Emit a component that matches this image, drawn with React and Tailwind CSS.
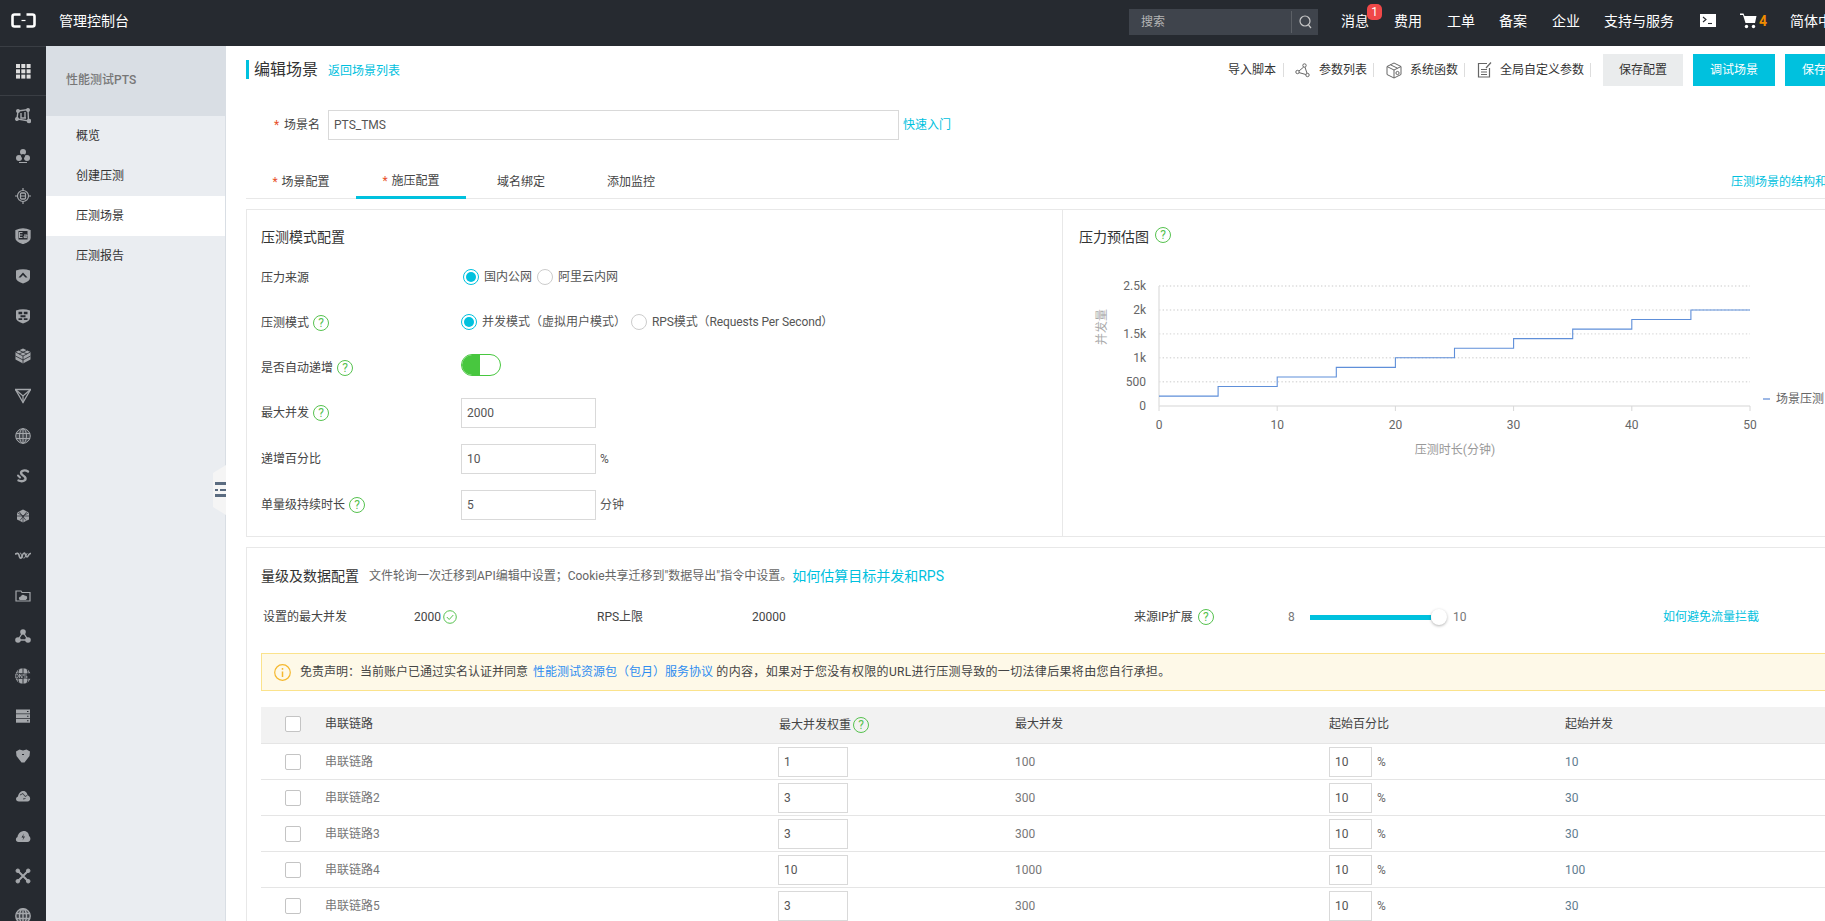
import React from "react";

const C = "#a4a7ab";
const D = "#262a30";
const railIcons = [
  <g fill="none" stroke={C} strokeWidth="1.4"><path d="M3 3 L13 1.5 L13.5 13 L2 11 Z" /><path d="M6 5v5h5M10 4v6" /><circle cx="3" cy="3" r="1.3" fill={C} /><circle cx="13" cy="2" r="1.3" fill={C} /><circle cx="14" cy="13" r="1.6" fill={C} /><circle cx="2" cy="11" r="1.3" fill={C} /></g>,
  <g fill={C}><circle cx="8" cy="4" r="3" /><circle cx="4" cy="10" r="3" /><circle cx="12" cy="10" r="3" /><circle cx="8" cy="8" r="2" fill={D} /><path d="M4 14h8v1H4z" /></g>,
  <g fill="none" stroke={C} strokeWidth="1.2"><circle cx="8" cy="8" r="5.5" /><rect x="5.5" y="5" width="5" height="6" rx="1" strokeWidth="1.3" /><path d="M5.5 8h5M8 0v2.5M8 13.5V16M0 8h2.5M13.5 8H16" /></g>,
  <g fill="none" stroke={C} strokeWidth="1.3"><path d="M1 2.5 Q8 -0.5 15 2.5 V10 Q15 13 8 15.5 Q1 13 1 10 Z" fill={C} /><rect x="3.5" y="3" width="9" height="8.5" fill={D} stroke="none" /><path d="M4.5 4.5h3M4.5 7h3M4.5 9.5h3M9 7h3v1.2h-3v1.4h3M4.5 4v6" strokeWidth="1" /></g>,
  <g><path d="M1 2.5 Q8 0 15 2.5 V10 Q15 13 8 15.5 Q1 13 1 10 Z" fill={C} /><path d="M3.5 9.5 L8 4.5 L12.5 9.5 L10.5 9.5 L8 7 L5.5 9.5 Z" fill={D} /></g>,
  <g><path d="M1 2.5 Q8 0 15 2.5 V10 Q15 13 8 15.5 Q1 13 1 10 Z" fill={C} /><path d="M3.5 3.8h3.7v2.4H3.5zM8.8 3.8h3.7v2.4H8.8zM5.5 7.3h5v2h-5zM3.5 10.3h3.7v1.6H3.5zM8.8 10.3h3.7v1.6H8.8z" fill={D} /></g>,
  <g><path d="M8 0.5 L15.5 4 V11.5 L8 15.5 L0.5 11.5 V4 Z" fill={C} /><path d="M0.5 4 L8 8 L15.5 4M8 8v7.5M4 2.3 L12 6M12 2.3 L4 6M0.5 8 L8 12 L15.5 8" stroke={D} strokeWidth="0.8" fill="none" /></g>,
  <g fill="none" stroke={C} strokeWidth="1.3"><path d="M0.5 1.5 L15.5 1.5 L8 14.5 Z" /><path d="M0.5 1.5 L8 8 L15.5 1.5M8 8v6.5" /></g>,
  <g fill="none" stroke={C} strokeWidth="1"><circle cx="8" cy="8" r="7.3" fill={C} fillOpacity="0.25" /><ellipse cx="8" cy="8" rx="3.5" ry="7.3" /><path d="M1 5.5h14M1 10.5h14M8 .7v14.6" /></g>,
  <g fill="none" stroke={C} strokeWidth="2.4" strokeLinecap="round"><path d="M13 3.5 C10 1.5 6 2.5 6 5 C6 7 10 8 10.5 10 C11 13 7 14 3.5 12.5" /><path d="M3 7.5 L5 9.5" strokeWidth="2" /></g>,
  <g><path d="M8 1.5 L14 4.5 V11.5 L8 14.5 L2 11.5 V4.5 Z" fill={C} /><path d="M2 4.5 L8 8 L14 4.5M8 8v6.5M4 3.5 L11 12.5M12 3.5 L5 12.5M2 8h12" stroke={D} strokeWidth="0.7" fill="none" /></g>,
  <g fill="none" stroke={C} strokeWidth="1.6" strokeLinecap="round"><path d="M0.5 6 C2 5 3.5 5 4 7 C4.5 10 5.5 11 6.5 9.5 C7.5 7.5 8 4.5 9.5 5 C10.5 5.5 10.5 9 12 9 C13.5 9 13 6 15.5 5.5" /><path d="M5.5 5 L8 10M9.5 10 L12 5.5" strokeWidth="1" /></g>,
  <g fill="none" stroke={C} strokeWidth="1.2"><path d="M1 3 H6 L7 4.5 H15 V13 H1 Z" /><path d="M5 11.5 Q3.5 9.5 6 9 Q7 6.5 9.5 8 Q12 8 11.5 10.5 L10.5 11.5 Z" fill={C} /></g>,
  <g fill={C}><circle cx="8" cy="4" r="2.8" /><circle cx="3" cy="12" r="2.8" /><circle cx="13" cy="12" r="2.8" /><path d="M8 4 L3 12 H13 Z" fill="none" stroke={C} strokeWidth="1.3" /></g>,
  <g><circle cx="8" cy="8" r="7.8" fill={C} /><rect x="-0.5" y="5.2" width="17" height="5.6" fill={D} /><path d="M8 0v5M8 11v5M4 1.5 Q3 3 3 5M12 1.5 Q13 3 13 5M3 11 Q3 13 4 14.5M13 11 Q13 13 12 14.5" stroke={D} strokeWidth="0.9" fill="none" /><path d="M0.8 6v4h1.4l1-1v-2l-1-1zM4.6 10V6l2.4 4V6M8.8 6h3M8.8 6v2h3v2h-3" stroke={C} strokeWidth="0.9" fill="none" /></g>,
  <g fill={C}><rect x="1" y="1.5" width="14" height="4" /><rect x="1" y="6.2" width="14" height="4" /><rect x="1" y="10.9" width="14" height="3.8" /><path d="M12 3h1.5v1H12zM12 7.7h1.5v1H12zM12 12.3h1.5v1H12z" fill={D} /></g>,
  <g><path d="M1 3.5 L4.5 1.5 L8 2.5 L11.5 1.5 L15 3.5 L14.5 8 L9.5 14.5 H6.5 L1.5 8 Z" fill={C} /><path d="M7 6h2v1H7z" fill={D} /></g>,
  <g><path d="M4 13.5 C0.5 13.5 0 9.5 3 8.5 C3.5 5 6 3 8.5 3 C11 3 12.5 5.5 12.5 7.5 C15.5 7.5 16.5 13.5 12.5 13.5 Z" fill={C} /><path d="M5 7 L8 5.5 L10 8.5 L12 7.5M8 11 L10.5 10.5" stroke={D} strokeWidth="0.8" fill="none" /></g>,
  <g><path d="M3.5 14 C0.5 14 0 10 2.5 9 C3 5 6.5 3 9 3 C12 3 14 5.5 14 8 C16.5 9.5 15.5 14 12.5 14 Z" fill={C} /><path d="M9 5.5 L6.5 9.5 H8.5 L7.5 12.5 L10 8.5 H8 Z" fill={D} /></g>,
  <g fill={C} stroke={C}><path d="M3 3 L13 13M13 3 L3 13" strokeWidth="2" /><circle cx="2.8" cy="2.8" r="1.8" /><circle cx="13.2" cy="2.8" r="1.8" /><circle cx="2.8" cy="13.2" r="1.8" /><circle cx="13.2" cy="13.2" r="1.8" /></g>,
  <g fill="none" stroke={C} strokeWidth="1.4"><circle cx="8" cy="8" r="7.2" fill={C} fillOpacity="0.2" /><ellipse cx="8" cy="8" rx="3.5" ry="7.2" /><path d="M1 5.5h14M1 10.5h14M8 .8v14.4" /></g>,
];

const Help = ({ className = "" }) => (
  <span className={`inline-flex items-center justify-center w-4 h-4 rounded-full border border-[#56c24f] text-[#56c24f] text-[12px] leading-none ${className}`}>?</span>
);

const Radio = ({ on }) => (
  <span className={`flex items-center justify-center w-4 h-4 rounded-full border ${on ? "border-[#00c1de]" : "border-[#cccccc]"}`}>
    {on && <span className="w-[10px] h-[10px] rounded-full bg-[#00c1de]" />}
  </span>
);

const Field = ({ value, className = "" }) => (
  <input readOnly value={value} className={`border border-[#d9d9d9] text-xs text-[#555] pl-[5px] outline-none bg-white h-[30px] ${className}`} />
);

const FormRow = ({ label, help, helpClass, children, className = "", labelClass = "" }) => (
  <div className={`flex items-center h-[30px] ${className}`}>
    <div className={`w-[200px] flex items-center gap-[4px] text-xs text-[#444] ${labelClass}`}>
      <span>{label}</span>
      {help && <Help className={helpClass} />}
    </div>
    {children}
  </div>
);

const Sep = () => <span className="block w-px h-[14px] bg-[#dddddd]" />;

const StepChart = () => {
  const x = (t) => 1159 + t * 11.82;
  const y = (v) => 405.7 - v * 0.04788;
  let d = `M${x(0)} ${y(200)}`;
  for (let i = 0; i < 10; i++) {
    const v = (i + 1) * 200;
    d += ` L${x((i + 1) * 5)} ${y(v)}`;
    if (i < 9) d += ` L${x((i + 1) * 5)} ${y(v + 200)}`;
  }
  const t = { fontSize: 12, fill: "#666", fontFamily: "Roboto, 'Noto Sans CJK SC', sans-serif" };
  return (
    <svg viewBox="1063 270 762 200" className="w-[762px] h-[200px] block">
      {[500, 1000, 1500, 2000, 2500].map((v) => (
        <line key={v} x1={1159} x2={1750} y1={y(v)} y2={y(v)} stroke="#dcdcdc" strokeWidth="1.4" strokeDasharray="1.4 2.2" />
      ))}
      <line x1={1159} x2={1159} y1={286} y2={406} stroke="#e3e3e3" strokeWidth="1.5" />
      <line x1={1159} x2={1750} y1={406} y2={406} stroke="#e3e3e3" strokeWidth="1.5" />
      {[0, 10, 20, 30, 40, 50].map((v) => (
        <g key={v}>
          <line x1={x(v)} x2={x(v)} y1={406} y2={411} stroke="#d8d8d8" />
          <text x={x(v)} y={429} textAnchor="middle" {...t}>{v}</text>
        </g>
      ))}
      {[["0", 0], ["500", 500], ["1k", 1000], ["1.5k", 1500], ["2k", 2000], ["2.5k", 2500]].map(([l, v]) => (
        <text key={l} x={1146} y={y(v) + 4} textAnchor="end" {...t}>{l}</text>
      ))}
      <path d={d} fill="none" stroke="#5f8fd9" strokeWidth="1.1" />
      <text x={1455} y={454} textAnchor="middle" {...t} fill="#999">压测时长(分钟)</text>
      <text transform="rotate(-90 1102 327)" x={1102} y={331} textAnchor="middle" {...t} fill="#aaa">并发量</text>
      <rect x={1763} y={398} width={7} height={2} fill="#9db8e6" />
      <text x={1776} y={403} {...t}>场景压测</text>
    </svg>
  );
};

const rows = [
  ["串联链路", "1", "100", "10"],
  ["串联链路2", "3", "300", "30"],
  ["串联链路3", "3", "300", "30"],
  ["串联链路4", "10", "1000", "100"],
  ["串联链路5", "3", "300", "30"],
];
const gridCols = "grid grid-cols-[517px_237px_314px_236px_1fr] items-center";
const Check = () => <span className="w-4 h-4 rounded-[2px] border border-[#c4c4c4] bg-white shrink-0" />;

export default function App() {
  return (
    <div className="w-[1825px] h-[921px] overflow-hidden flex flex-col bg-white font-['Roboto','Noto_Sans_CJK_SC',sans-serif]">
      {/* top bar */}
      <header className="h-[46px] shrink-0 bg-[#262a30] flex items-center pb-[5px] text-white text-sm whitespace-nowrap [&>*]:shrink-0">
        <div className="w-[46px] flex justify-center">
          <svg width="25" height="15" viewBox="0 0 25 15" fill="none" stroke="#fff" strokeWidth="2.6">
            <path d="M9.5 1.5 H3.5 Q1.5 1.5 1.5 3.5 V11.5 Q1.5 13.5 3.5 13.5 H9.5" />
            <path d="M15.5 1.5 H21.5 Q23.5 1.5 23.5 3.5 V11.5 Q23.5 13.5 21.5 13.5 H15.5" />
            <path d="M10.5 7.5 H14.5" strokeWidth="1.2" />
          </svg>
        </div>
        <span className="ml-[13px] w-[70px]">管理控制台</span>
        <div className="ml-[1000px] w-[189px] h-[26px] bg-[#3f444c] flex items-center text-xs text-[#b5b5b5] pl-3 mt-[2px]">
          <span className="w-[150px]">搜索</span>
          <span className="w-px h-[22px] bg-[#5c6066]" />
          <svg className="ml-[7px]" width="13" height="14" viewBox="0 0 13 14" fill="none" stroke="#c8c8c8" strokeWidth="1.2">
            <circle cx="6" cy="6" r="5" /><path d="M9.5 10 L12 13" />
          </svg>
        </div>
        <div className="relative ml-[23px]">
          消息
          <span className="absolute left-[26px] top-[-7px] w-[15px] h-[16px] rounded-[5px] bg-[#f04848] text-[12px] leading-[16px] text-center">1</span>
        </div>
        <span className="ml-[25px]">费用</span>
        <span className="ml-[25px]">工单</span>
        <span className="ml-[24px]">备案</span>
        <span className="ml-[25px]">企业</span>
        <span className="ml-[24px]">支持与服务</span>
        <svg className="ml-[26px]" width="16" height="13" viewBox="0 0 16 13">
          <rect width="16" height="13" fill="#fff" />
          <path d="M3 3 L6 5.5 L3 8" fill="none" stroke="#262a30" strokeWidth="1.1" /><path d="M8 9.5 H12" stroke="#262a30" strokeWidth="1.1" />
        </svg>
        <svg className="ml-[24px]" width="17" height="16" viewBox="0 0 17 16" fill="#fff">
          <path d="M0 0.5 H3.5 L4.5 3 H16.5 L15 10 H5.5 L3 2 H0 Z" /><circle cx="6.5" cy="13.5" r="1.7" /><circle cx="13.5" cy="13.5" r="1.7" />
        </svg>
        <span className="ml-[2px] font-bold text-[#f08c00] w-[8px]">4</span>
        <span className="ml-[23px]">简体中文</span>
      </header>

      <div className="flex flex-1 min-h-0">
        {/* rail */}
        <nav className="w-[46px] shrink-0 bg-[#262a30] border-t border-[#3a3e44] flex flex-col">
          <div className="h-[49px] shrink-0 border-b border-[#3a3e44] flex items-center justify-center">
            <svg width="15" height="15" viewBox="0 0 15 15" fill="#dddddd">
              {[0, 5.3, 10.6].flatMap((a) => [0, 5.3, 10.6].map((b) => <rect key={`${a}-${b}`} x={a} y={b} width="4" height="4" />))}
            </svg>
          </div>
          {railIcons.map((icon, i) => (
            <div key={i} className="h-10 shrink-0 flex items-center justify-center">
              <svg width="16" height="16" viewBox="0 0 16 16">{icon}</svg>
            </div>
          ))}
        </nav>

        {/* sidebar */}
        <aside className="relative w-[180px] shrink-0 bg-[#eaedf1] border-r border-[#d9dee4] text-xs text-[#333]">
          <div className="h-[70px] bg-[#d9dee4] flex items-center pl-5 pb-[2px] text-[#777] font-medium">性能测试PTS</div>
          {["概览", "创建压测", "压测场景", "压测报告"].map((t) => (
            <div key={t} className={`h-10 flex items-center pl-[30px] ${t === "压测场景" ? "bg-white" : ""}`}>{t}</div>
          ))}
          <div className="absolute left-[167px] top-[419px] w-[13px] h-[50px]">
            <svg width="13" height="50" viewBox="0 0 13 50" className="block">
              <polygon points="13,0 0,8 0,42 13,50" fill="#f5f5f5" />
              <rect x="2" y="17" width="11" height="3" fill="#5a6b80" />
              <rect x="2" y="24" width="3" height="2" fill="#5a6b80" />
              <rect x="7" y="24" width="6" height="2" fill="#5a6b80" />
              <rect x="2" y="29" width="11" height="3" fill="#5a6b80" />
            </svg>
          </div>
        </aside>

        {/* main */}
        <main className="flex-1 min-w-0 pl-5">
          <div className="w-[1640px]">
            {/* toolbar */}
            <div className="flex items-center h-8 mt-2 whitespace-nowrap">
              <span className="w-[3px] h-[19px] bg-[#00c1de] -mt-[1px]" />
              <span className="ml-[5px] text-base text-[#333] leading-none">编辑场景</span>
              <span className="ml-[10px] text-xs text-[#00c1de] mt-[2px]">返回场景列表</span>
              <div className="ml-auto flex items-center text-xs text-[#333] pr-[19px]">
                <span>导入脚本</span>
                <span className="ml-[7px]"><Sep /></span>
                <svg className="ml-[11px]" width="15" height="15" viewBox="0 0 15 15" fill="none" stroke="#666" strokeWidth="1">
                  <circle cx="9.5" cy="2.5" r="1.7" /><circle cx="2.5" cy="9" r="1.7" /><circle cx="12.5" cy="12" r="1.7" />
                  <path d="M8.7 4 L4 8M10 4.2 L12 10.3M4 9.6 L10.8 11.5" />
                </svg>
                <span className="ml-[9px]">参数列表</span>
                <span className="ml-[6px]"><Sep /></span>
                <svg className="ml-3" width="16" height="17" viewBox="0 0 16 17" fill="none" stroke="#666" strokeWidth="1">
                  <path d="M8 1 L15 4.5 V12.5 L8 16 L1 12.5 V4.5 Z" /><path d="M1 4.5 L8 8 L15 4.5M8 8v8M4.5 2.8 L11.5 6.2" /><circle cx="11.5" cy="11" r="1.6" />
                </svg>
                <span className="ml-2">系统函数</span>
                <span className="ml-[6px]"><Sep /></span>
                <svg className="ml-3" width="15" height="16" viewBox="0 0 15 16" fill="none" stroke="#666" strokeWidth="1.2">
                  <path d="M10 1.5 H1.5 V15 H12.5 V6" /><path d="M14 0.5 L9 6" /><path d="M4 7.5 H10M4 10 H10M4 12.5 H10" />
                </svg>
                <span className="ml-2">全局自定义参数</span>
                <span className="ml-[6px]"><Sep /></span>
                <button className="ml-3 w-20 h-8 bg-[#eaeced] text-[#333]">保存配置</button>
                <button className="ml-[10px] w-[82px] h-8 bg-[#00c1de] text-white">调试场景</button>
                <button className="ml-[10px] w-[82px] h-8 bg-[#00c1de] text-white">保存场景</button>
              </div>
            </div>

            {/* scene name */}
            <div className="flex items-center h-[30px] mt-6 text-xs">
              <span className="ml-7 w-[10px] text-[#e8502a]">*</span>
              <span className="text-[#444] w-[44px]">场景名</span>
              <input readOnly value="PTS_TMS" className="w-[571px] h-[30px] border border-[#d9d9d9] pl-[5px] text-xs text-[#555] outline-none" />
              <span className="ml-1 text-[#00c1de]">快速入门</span>
            </div>

            {/* tabs */}
            <div className="flex h-8 mt-[27px] border-b-[1.5px] border-[#e8e8e8] text-xs text-[#444] whitespace-nowrap">
              <div className="w-[110px] flex items-center justify-center pb-[1px]"><span className="text-[#e8502a] mr-1">*</span>场景配置</div>
              <div className="w-[110px] flex items-center justify-center pb-[1px] border-b-[3px] border-[#00c1de] h-[32px]"><span className="text-[#e8502a] mr-1">*</span>施压配置</div>
              <div className="w-[110px] flex items-center justify-center pb-[1px]">域名绑定</div>
              <div className="w-[110px] flex items-center justify-center pb-[1px]">添加监控</div>
              <span className="ml-auto pr-[11px] pb-[1px] flex items-center text-[#00c1de]">压测场景的结构和配置说明</span>
            </div>

            {/* panel 1 */}
            <section className="mt-[10px] h-[328px] border border-[#e8e8e8] flex">
              <div className="w-[815px] shrink-0 pl-[14px] whitespace-nowrap">
                <h2 className="h-[53px] flex items-center text-sm text-[#333] font-normal">压测模式配置</h2>
                <FormRow label="压力来源">
                  <div className="flex items-center text-xs text-[#555] ml-[2px] -mt-[2px]">
                    <Radio on /><span className="ml-[5px]">国内公网</span>
                    <span className="ml-[5px]"><Radio /></span><span className="ml-[5px]">阿里云内网</span>
                  </div>
                </FormRow>
                <FormRow label="压测模式" help className="mt-[15px]">
                  <div className="flex items-center text-xs text-[#555] -mt-[2px]">
                    <Radio on /><span className="ml-[5px]">并发模式（虚拟用户模式）</span>
                    <span className="ml-[5px]"><Radio /></span><span className="ml-[5px] tracking-[-0.1px]">RPS模式（Requests Per Second）</span>
                  </div>
                </FormRow>
                <FormRow label="是否自动递增" help className="mt-3" labelClass="mt-[6px]">
                  <span className="flex w-10 h-[22px] rounded-full border border-[#48c73f] overflow-hidden bg-white">
                    <span className="w-[18px] h-full bg-[#48c73f]" />
                  </span>
                </FormRow>
                <FormRow label="最大并发" help className="mt-[18px]"><Field value="2000" className="w-[135px]" /></FormRow>
                <FormRow label="递增百分比" className="mt-4">
                  <Field value="10" className="w-[135px]" /><span className="ml-1 text-xs text-[#555]">%</span>
                </FormRow>
                <FormRow label="单量级持续时长" help className="mt-4">
                  <Field value="5" className="w-[135px]" /><span className="ml-1 text-xs text-[#555]">分钟</span>
                </FormRow>
              </div>
              <div className="flex-1 border-l border-[#e8e8e8] whitespace-nowrap">
                <h2 className="h-[53px] pl-4 flex items-center gap-[6px] text-sm text-[#333] font-normal">压力预估图 <Help className="-mt-1" /></h2>
                <div className="mt-[7px]"><StepChart /></div>
              </div>
            </section>

            {/* panel 2 */}
            <section className="mt-[10px] border border-[#e8e8e8] pl-[14px] pt-[18px] whitespace-nowrap">
              <div className="flex items-center h-5">
                <h2 className="text-sm text-[#333] font-normal">量级及数据配置</h2>
                <span className="ml-[10px] text-xs text-[#666]">文件轮询一次迁移到API编辑中设置；Cookie共享迁移到"数据导出"指令中设置。</span>
                <span className="text-sm text-[#00c1de]">如何估算目标并发和RPS</span>
              </div>
              <div className="flex items-center h-5 mt-[21px] ml-[2px] text-xs text-[#444]">
                <span className="w-[151px]">设置的最大并发</span>
                <span className="w-[183px] flex items-center">2000
                  <svg width="14" height="14" viewBox="0 0 14 14" fill="none" stroke="#56c24f" className="ml-[2px]">
                    <circle cx="7" cy="7" r="6.3" /><path d="M3.8 7 L6.2 9.5 L10.3 5" />
                  </svg>
                </span>
                <span className="w-[155px]">RPS上限</span>
                <span className="w-[382px]">20000</span>
                <span className="w-[154px] flex items-center gap-[5px]">来源IP扩展 <Help /></span>
                <span className="w-[22px] text-[#777]">8</span>
                <span className="relative w-[143px] h-4 flex items-center">
                  <span className="w-[121px] h-[5px] bg-[#00c1de]" />
                  <span className="absolute left-[121px] top-0 w-4 h-4 rounded-full bg-white shadow-[0_1px_3px_rgba(0,0,0,0.3)]" />
                </span>
                <span className="w-[210px] text-[#777]">10</span>
                <span className="text-[#00c1de]">如何避免流量拦截</span>
              </div>
              <div className="mt-[26px] h-[38px] border border-[#fbe38c] bg-[#fef9e8] flex items-center text-xs text-[#444]">
                <svg className="ml-[12px]" width="17" height="17" viewBox="0 0 17 17" fill="none" stroke="#f5b82e" strokeWidth="1.2">
                  <circle cx="8.5" cy="8.5" r="7.8" /><path d="M8.5 7.5 V13M8.5 4 V5.8" strokeWidth="1.5" />
                </svg>
                <span className="ml-[9px]">免责声明：当前账户已通过实名认证并同意&nbsp;</span>
                <span className="text-[#2d8cf0] ml-[2px]">性能测试资源包（包月）服务协议</span>
                <span className="tracking-[0.33px]">&nbsp;的内容，如果对于您没有权限的URL进行压测导致的一切法律后果将由您自行承担。</span>
              </div>
              <div className="mt-4 text-xs">
                <div className={`${gridCols} h-[37px] bg-[#f2f2f2] border-b border-[#e5e5e5] text-[#444]`}>
                  <div className="flex items-center pl-6 gap-[24px] pb-[2px]"><Check /><span>串联链路</span></div>
                  <div className="flex items-center gap-[2px] pl-px">最大并发权重 <Help /></div>
                  <div className="pb-[2px]">最大并发</div>
                  <div className="pb-[2px]">起始百分比</div>
                  <div className="pb-[2px]">起始并发</div>
                </div>
                {rows.map(([n, w, m, s]) => (
                  <div key={n} className={`${gridCols} h-9 border-b border-[#e5e5e5] text-[#777]`}>
                    <div className="flex items-center pl-6 gap-[24px]"><Check /><span>{n}</span></div>
                    <div><Field value={w} className="w-[70px]" /></div>
                    <div>{m}</div>
                    <div className="flex items-center"><Field value="10" className="w-[43px]" /><span className="ml-[5px] text-[#666]">%</span></div>
                    <div className="text-[#5f7d90]">{s}</div>
                  </div>
                ))}
              </div>
            </section>
          </div>
        </main>
      </div>
    </div>
  );
}
